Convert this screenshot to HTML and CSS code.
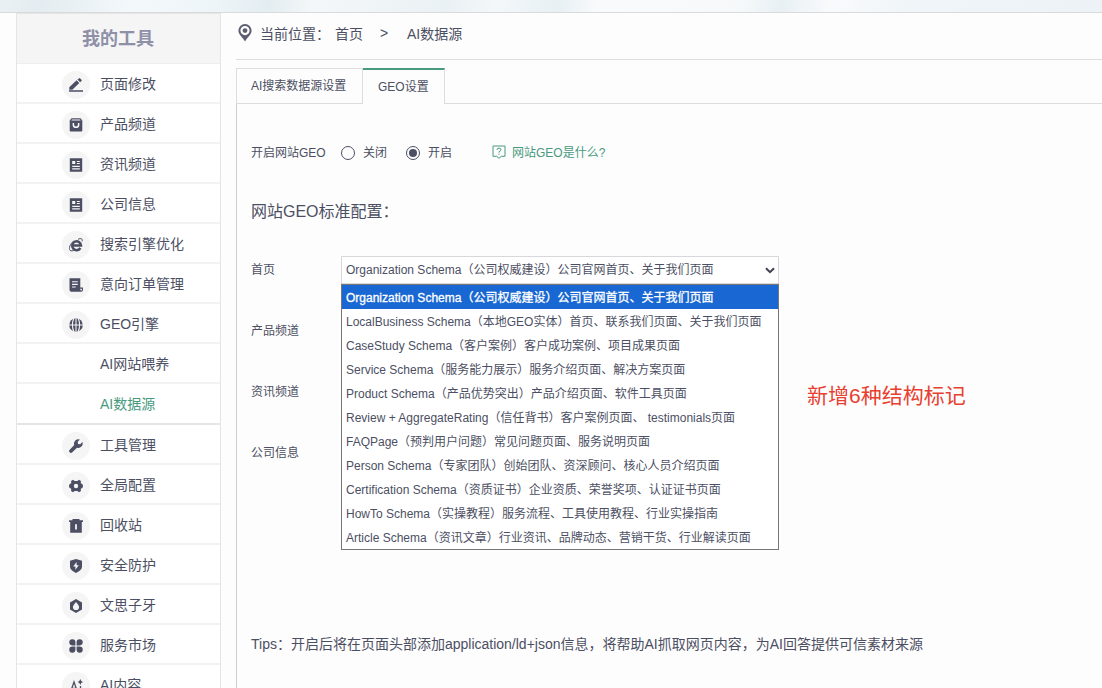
FILE: index.html
```html
<!DOCTYPE html>
<html lang="zh-CN">
  <head>
    <meta charset="UTF-8" />
    <title>AI数据源</title>
    <link rel="stylesheet" href="styles.css">
  </head>
  <body>
    <div class="banner"></div>

    <div class="page">
      <div class="sidebar">
        <div class="sidebar-title">我的工具</div>
        <ul class="menu">
          <li>
            <span class="icon"><svg viewBox="0 0 14 14"><path d="M.3 11.7V9.2L7.6 2.2 10.3 4.9 3.3 11.7zM8.4 1.5 10.6 0 13 2.3 11.2 4.2zM0 12.2H14V13.7H0z"/></svg></span>
            <span>页面修改</span>
          </li>
          <li>
            <span class="icon"><svg viewBox="0 0 14 14"><path fill-rule="evenodd" d="M2.5.3h9L13.3 2.5V12.6q0 1-1 1H1.7q-1 0-1-1V2.5zM3 1.5 2.3 2.6h9.4L11 1.5zM3.6 5v1.7a3.4 3.4 0 0 0 6.8 0V5H8.9v1.6a1.9 1.9 0 0 1-3.8 0V5z"/></svg></span>
            <span>产品频道</span>
          </li>
          <li>
            <span class="icon"><svg viewBox="0 0 14 14"><path fill-rule="evenodd" d="M.8.3h12.4v13.4H.8zM3.2 3v3h3V3zM7.8 3v1h3V3zM7.8 5v1h3V5zM3.2 7.7V9h7.6V7.7zM3.2 10.3v1.2h7.6v-1.2z"/></svg></span>
            <span>资讯频道</span>
          </li>
          <li>
            <span class="icon"><svg viewBox="0 0 14 14"><path fill-rule="evenodd" d="M.8.3h12.4v13.4H.8zM3.2 3v3h3V3zM7.8 3v1h3V3zM7.8 5v1h3V5zM3.2 7.7V9h7.6V7.7zM3.2 10.3v1.2h7.6v-1.2z"/></svg></span>
            <span>公司信息</span>
          </li>
          <li>
            <span class="icon"><svg viewBox="0 0 14 14"><path class="stroke wide" d="M3.6 7.6H12A4.4 4.4 0 1 0 11.4 10"/><path class="stroke thin" d="M9 1.3C12 0 14 .6 13 3.4M4.6 3C1.2 6-.6 10.3 1 12.3 1.9 13.4 4.2 12.9 6 11.8"/></svg></span>
            <span>搜索引擎优化</span>
          </li>
          <li>
            <span class="icon"><svg viewBox="0 0 14 14"><path fill-rule="evenodd" d="M.5.3h10.8v9.2H14v2.3a1.9 1.9 0 0 1-1.9 1.9H2.3A1.8 1.8 0 0 1 .5 12zM3 3.2v1.1h5.8V3.2zM3 5.8v1.1h5.8V5.8zM3 8.4v1.1h3.7V8.4zM11.3 10.8v1q0 .8.8.8t.8-.8v-1z"/></svg></span>
            <span>意向订单管理</span>
          </li>
          <li>
            <span class="icon"><svg viewBox="0 0 14 14"><circle cx="7" cy="7" r="6.8"/><path class="cut" d="M0 7H14M7 0V14M5 0Q1.8 7 5 14M9 0Q12.2 7 9 14"/></svg></span>
            <span>GEO引擎</span>
          </li>
          <li class="sub"><span>AI网站喂养</span></li>
          <li class="sub active"><span>AI数据源</span></li>
          <li>
            <span class="icon"><svg viewBox="0 0 14 14"><path d="M5.2 6A4.4 4.4 0 0 1 10.9.5L8.7 2.8 9 4.9 11.2 5.3 13.4 3.1A4.4 4.4 0 0 1 8 8.8L3.3 13.3A1.8 1.8 0 0 1 .7 10.7z"/></svg></span>
            <span>工具管理</span>
          </li>
          <li>
            <span class="icon"><svg viewBox="0 0 14 14"><path fill-rule="evenodd" d="M4 .8 5.6 2H8.4L10 .8 12 2.1 11.7 4.1 13.9 5.8V8.2L11.7 9.9 12 11.9 10 13.2 8.4 12H5.6L4 13.2 2 11.9 2.3 9.9.1 8.2V5.8L2.3 4.1 2 2.1zM7 4.8a2.2 2.2 0 1 0 0 4.4 2.2 2.2 0 1 0 0-4.4z"/></svg></span>
            <span>全局配置</span>
          </li>
          <li>
            <span class="icon"><svg viewBox="0 0 14 14"><path fill-rule="evenodd" d="M3.5 0h7v1.3H14v1.6h-1.2v10.8H1.2V2.9H0V1.3h3.5zM6.1 5.3v5.2h1.8V5.3z"/></svg></span>
            <span>回收站</span>
          </li>
          <li>
            <span class="icon"><svg viewBox="0 0 14 14"><path fill-rule="evenodd" d="M7 0 13 1.7V7.8Q13 11.3 7 14 1 11.3 1 7.8V1.7zM7.6 3 4.2 7.6H6.4V10.8L9.8 6.2H7.6z"/></svg></span>
            <span>安全防护</span>
          </li>
          <li>
            <span class="icon"><svg viewBox="0 0 14 14"><path fill-rule="evenodd" d="M7 0 13 3.5V10.5L7 14 1 10.5V3.5zM7 3Q3.9 6.5 3.9 8a3.1 3.1 0 0 0 6.2 0Q10.1 6.5 7 3z"/></svg></span>
            <span>文思子牙</span>
          </li>
          <li>
            <span class="icon"><svg viewBox="0 0 14 14"><path d="M3.3.3a3 3 0 0 1 3.1 3.1V6.4H3.3A3.05 3.05 0 0 1 3.3.3zM10.7.3a3 3 0 0 0-3.1 3.1V6.4H10.7A3.05 3.05 0 0 0 10.7.3zM3.3 13.7a3 3 0 0 0 3.1-3.1V7.6H3.3A3.05 3.05 0 0 0 3.3 13.7zM10.7 13.7a3 3 0 0 1-3.1-3.1V7.6H10.7A3.05 3.05 0 0 1 10.7 13.7z"/></svg></span>
            <span>服务市场</span>
          </li>
          <li>
            <span class="icon"><svg viewBox="0 0 14 14"><path class="stroke" d="M1.5 13 5 3 8.5 13M2.8 9.5H7.2M11.5 7V13"/><path d="M11.3 0 12.2 2.1 14 3 12.2 3.9 11.3 6 10.4 3.9 8.6 3 10.4 2.1z"/></svg></span>
            <span>AI内容</span>
          </li>
        </ul>
      </div>

      <div class="main">
        <div class="crumbs">
          <svg class="pin" viewBox="0 0 14 18"><path fill-rule="evenodd" d="M7 0a6.6 6.6 0 0 1 6.6 6.6C13.6 10.6 9.8 13 7 17.5 4.2 13 .4 10.6.4 6.6A6.6 6.6 0 0 1 7 0zM7 2a4.6 4.6 0 1 0 0 9.2A4.6 4.6 0 1 0 7 2z"/><circle cx="7" cy="6.6" r="2.4"/></svg>
          <span class="crumb-label">当前位置：</span>
          <span class="crumb-home">首页</span>
          <span class="crumb-sep">&gt;</span>
          <span>AI数据源</span>
        </div>

        <div class="tabs">
          <div class="tab">AI搜索数据源设置</div>
          <div class="tab current">GEO设置</div>
          <div class="tab-rest"></div>
        </div>

        <div class="panel">
          <div class="switch">
            <span class="switch-label">开启网站GEO</span>
            <span class="radio"></span><span class="radio-text">关闭</span>
            <span class="radio checked"></span><span class="radio-text">开启</span>
            <a class="help">
              <svg viewBox="0 0 14 14"><path d="M1 1H13V11.3H9.3L7 13.3 4.7 11.3H1z"/><path d="M5 4.9Q5 3.1 7 3.1T9 4.8Q9 5.8 7 6.6V7.6M7 8.6V9.8"/></svg>
              <span>网站GEO是什么?</span>
            </a>
          </div>

          <h2>网站GEO标准配置：</h2>

          <div class="fields">
            <div class="field">
              <label>首页</label>
              <div class="select">
                <span>Organization Schema（公司权威建设）公司官网首页、关于我们页面</span>
                <svg class="arrow" viewBox="0 0 10 7"><path d="M1 1.2 5 5.2 9 1.2"/></svg>
                <ul class="options">
                  <li class="selected">Organization Schema（公司权威建设）公司官网首页、关于我们页面</li>
                  <li>LocalBusiness Schema（本地GEO实体）首页、联系我们页面、关于我们页面</li>
                  <li>CaseStudy Schema（客户案例）客户成功案例、项目成果页面</li>
                  <li>Service Schema（服务能力展示）服务介绍页面、解决方案页面</li>
                  <li>Product Schema（产品优势突出）产品介绍页面、软件工具页面</li>
                  <li>Review + AggregateRating（信任背书）客户案例页面、 testimonials页面</li>
                  <li>FAQPage（预判用户问题）常见问题页面、服务说明页面</li>
                  <li>Person Schema（专家团队）创始团队、资深顾问、核心人员介绍页面</li>
                  <li>Certification Schema（资质证书）企业资质、荣誉奖项、认证证书页面</li>
                  <li>HowTo Schema（实操教程）服务流程、工具使用教程、行业实操指南</li>
                  <li>Article Schema（资讯文章）行业资讯、品牌动态、营销干货、行业解读页面</li>
                </ul>
              </div>
            </div>
            <div class="field"><label>产品频道</label></div>
            <div class="field"><label>资讯频道</label></div>
            <div class="field"><label>公司信息</label></div>
            <div class="note">新增6种结构标记</div>
          </div>

          <p class="tips">Tips：开启后将在页面头部添加application/ld+json信息，将帮助AI抓取网页内容，为AI回答提供可信素材来源</p>
        </div>
      </div>
    </div>
  </body>
</html>
```
FILE: styles.css
```css
* {
  box-sizing: border-box;
}

body {
  margin: 0;
  height: 688px;
  overflow: hidden;
  background: #fdfdfd;
  color: #4c4f63;
  font-family: "Liberation Sans", "Noto Sans CJK SC", sans-serif;
  font-size: 12px;
}

ul {
  list-style: none;
  margin: 0;
  padding: 0;
}

.banner {
  height: 13px;
  border-bottom: 1px solid #d9dadb;
  background: linear-gradient(100deg, #eaf1f4 0, #e3ecf0 40px, #f3f8fb 130px, #eef5f8 210px, #e3edf1 265px, #f4f7f9 310px, #eaf1f4 440px, #f3f7fa 490px, #e7f0f3 550px, #f9fafc 590px, #f6f9fa 730px, #e8f0f4 770px, #f9fafc 820px, #eff5f8 900px, #edf2f6 100%);
}

.page {
  display: flex;
  height: 675px;
}

/* left menu */
.sidebar {
  width: 205px;
  margin-left: 16px;
  border: 1px solid #e5e5e7;
  border-bottom: 0;
  background: #fff;
  flex-shrink: 0;
}

.sidebar-title {
  height: 50px;
  line-height: 51px;
  padding-right: 1px;
  text-align: center;
  font-size: 18px;
  font-weight: bold;
  color: #8e90a8;
  background: #f5f5f5;
  border-bottom: 1px solid #eee;
}

.menu li {
  display: flex;
  align-items: center;
  height: 40px;
  padding-left: 45px;
  border-bottom: 2px solid #f2f2f2;
  font-size: 14px;
  line-height: 20px;
}

.menu li > span:last-child {
  margin-top: 1px;
}

.menu .sub {
  padding-left: 83px;
}

.menu .active {
  height: 41px;
  color: #489a7d;
  border-bottom-color: #e6e6e7;
}

.icon {
  display: flex;
  align-items: center;
  justify-content: center;
  width: 28px;
  height: 28px;
  margin-top: 4px;
  margin-right: 10px;
  padding-right: 1px;
  border-radius: 50%;
  background: #f5f5f5;
}

.icon svg {
  width: 14px;
  height: 14px;
  fill: #4c4f63;
}

.icon .stroke {
  fill: none;
  stroke: #4c4f63;
  stroke-width: 1.3;
}

.icon .wide {
  stroke-width: 2.5;
}

.icon .thin {
  stroke-width: 1;
}

.icon .cut {
  fill: none;
  stroke: #f5f5f5;
  stroke-width: 1.1;
}

/* right side */
.main {
  flex: 1;
  display: flex;
  flex-direction: column;
  margin-left: 15px;
}

.crumbs {
  display: flex;
  align-items: center;
  height: 47px;
  padding: 0 0 6px 2px;
  border-bottom: 1px solid #ddd;
  font-size: 14px;
}

.pin {
  width: 14px;
  height: 18px;
  margin-right: 8px;
  fill: #5b5e70;
}

.crumb-label {
  width: 75px;
}

.crumb-home {
  width: 45px;
}

.crumb-sep {
  width: 27px;
}

.tabs {
  display: flex;
  height: 36px;
  margin-top: 8px;
}

.tab {
  width: 127px;
  padding-left: 14px;
  line-height: 34px;
  border: 1px solid #ddd;
}

.tab.current {
  width: 82px;
  padding-left: 15px;
  border-top: 2px solid #489a7d;
  border-left: 0;
  border-bottom: 0;
}

.tab-rest {
  flex: 1;
  border-bottom: 1px solid #ddd;
}

.panel {
  flex: 1;
  padding: 38px 0 0 14px;
  border-left: 1px solid #ccc;
}

.switch {
  display: flex;
  align-items: center;
  height: 20px;
}

.switch-label {
  width: 90px;
}

.radio {
  width: 14px;
  height: 14px;
  margin-top: 1px;
  margin-right: 8px;
  border: 1px solid #4c4f63;
  border-radius: 50%;
}

.radio.checked {
  padding: 2px;
  background: #4c4f63 content-box;
}

.radio-text {
  width: 43px;
}

.switch-label,
.radio-text,
.help span {
  margin-bottom: 1px;
}

.help {
  display: flex;
  align-items: center;
  gap: 6px;
  margin-left: 21px;
  color: #489a7d;
}

.help svg {
  width: 14px;
  height: 14px;
  fill: none;
  stroke: #489a7d;
}

h2 {
  margin: 40px 0 0;
  font-size: 16px;
  font-weight: normal;
  line-height: 20px;
}

.fields {
  display: grid;
  grid-template-columns: 556px auto;
  grid-template-rows: repeat(4, 61px);
  margin-top: 34px;
}

.field {
  display: flex;
  grid-column: 1;
  line-height: 29px;
}

.field label {
  width: 90px;
}

.note {
  grid-column: 2;
  grid-row: 3;
  font-size: 21px;
  line-height: 36px;
  color: #e8402f;
}

.select {
  position: relative;
  display: flex;
  align-items: center;
  width: 438px;
  height: 28px;
  padding-left: 4px;
  border: 1px solid #d8d8dc;
  background: #fff;
}

.arrow {
  width: 10px;
  height: 7px;
  margin-left: auto;
  margin-right: 3px;
  fill: none;
  stroke: #3f4254;
  stroke-width: 2;
}

/* opened list */
.options {
  position: absolute;
  top: 27px;
  left: -1px;
  width: 438px;
  border: 1px solid #767676;
  background: #fff;
}

.options li {
  height: 24px;
  padding-left: 4px;
  line-height: 26px;
  white-space: nowrap;
}

.options .selected {
  background: #1967d2;
  color: #fff;
  -webkit-text-stroke: 0.3px #fff;
}

.tips {
  margin: 134px 0 0;
  font-size: 14px;
  line-height: 20px;
}
```
